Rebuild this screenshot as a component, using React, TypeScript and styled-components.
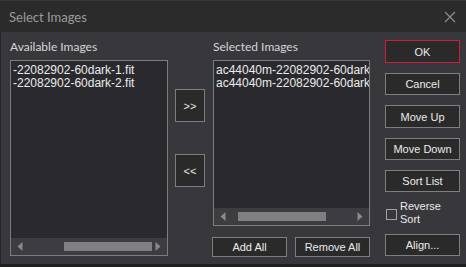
import React, { FC } from 'react';
import styled, { createGlobalStyle } from 'styled-components';

const GlobalStyle = createGlobalStyle`
  html, body {
    margin: 0;
    padding: 0;
    background: #1f1f1f;
  }
`;

const Window = styled.div`
  width: 466px;
  height: 267px;
  display: flex;
  flex-direction: column;
  background-color: #1f1f1f;
  overflow: hidden;
`;

const TitleBar = styled.div`
  height: 32px;
  flex-shrink: 0;
  display: flex;
  align-items: center;
  justify-content: space-between;
  background-color: #2b2b2b;
  padding: 0 9px;
  box-sizing: border-box;
  border-top: 1px solid #3a3a3a;
`;

const Title = styled.span`
  font-family: Lato, 'Noto Sans', sans-serif;
  font-size: 13px;
  color: #9b9b9b;
  margin-top: 1px;
`;

const CloseIcon = styled.svg`
  width: 12px;
  height: 12px;
  margin-right: 1px;
  margin-top: 1px;
`;

const Body = styled.div`
  height: 232px;
  flex-shrink: 0;
  display: flex;
  background-color: #38373c;
  padding-left: 9px;
  box-sizing: border-box;
  border-left: 1px solid #26262a;
`;

const ListColumn = styled.div<{ $width: number; $offset?: number }>`
  width: ${p => p.$width}px;
  margin-left: ${p => p.$offset ?? 0}px;
  display: flex;
  flex-direction: column;
`;

const Label = styled.div`
  height: 28px;
  padding-top: 7px;
  box-sizing: border-box;
  font-family: Lato, 'Noto Sans', sans-serif;
  font-size: 12px;
  color: #d6d6d6;
  line-height: 16px;
`;

const ListBox = styled.div<{ $height: number }>`
  height: ${p => p.$height}px;
  border: 1px solid #7d7d7d;
  background-color: #2a292d;
  box-sizing: border-box;
  display: flex;
  flex-direction: column;
  overflow: hidden;
`;

const Items = styled.div`
  flex: 1;
  padding: 3px 0 0 2px;
  overflow: hidden;
`;

const Item = styled.div`
  font-family: 'Liberation Sans', Arial, sans-serif;
  font-size: 12px;
  line-height: 12.5px;
  color: #ececec;
  white-space: nowrap;
`;

const ScrollBar = styled.div`
  height: 17px;
  flex-shrink: 0;
  display: flex;
  align-items: center;
  background-color: #3d3c41;
  padding: 0 6px;
`;

const Arrow = styled.svg`
  width: 6px;
  height: 9px;
  flex-shrink: 0;
`;

const Track = styled.div<{ $left: number; $width: number }>`
  flex: 1;
  height: 9px;
  position: relative;
  margin: 0 4px;
  &::after {
    content: '';
    position: absolute;
    top: 0;
    bottom: 0;
    left: ${p => p.$left}px;
    width: ${p => p.$width}px;
    background-color: #808080;
  }
`;

const MoveColumn = styled.div`
  width: 30px;
  margin-left: 7px;
  padding-top: 57px;
  display: flex;
  flex-direction: column;
  gap: 32px;
`;

const Button = styled.button<{ $primary?: boolean; $width?: number; $height?: number }>`
  width: ${p => p.$width ?? 75}px;
  height: ${p => p.$height ?? 23}px;
  flex-shrink: 0;
  padding: 0;
  margin: 0;
  background-color: #2a2a2b;
  border: 1px solid ${p => (p.$primary ? '#cf1c3c' : '#7e7e7e')};
  color: #eaeaea;
  font-family: 'Liberation Sans', Arial, sans-serif;
  font-size: 11px;
  box-sizing: border-box;
  cursor: pointer;
`;

const BottomRow = styled.div`
  display: flex;
  gap: 8px;
  margin-top: 11px;
  margin-left: -1px;
`;

const SideColumn = styled.div`
  width: 75px;
  margin-left: 15px;
  padding-top: 8px;
  display: flex;
  flex-direction: column;
  gap: 10px;
`;

const CheckRow = styled.label`
  display: flex;
  align-items: center;
  height: 26px;
  margin: -2px 0 -2px 1px;
  gap: 3px;
`;

const CheckBox = styled.span`
  width: 11px;
  height: 11px;
  border: 1px solid #a3a3a3;
  box-sizing: border-box;
  flex-shrink: 0;
  margin-top: 2px;
`;

const CheckText = styled.span`
  font-family: 'Liberation Sans', Arial, sans-serif;
  font-size: 11px;
  line-height: 13px;
  color: #eaeaea;
`;

const LeftArrow = () => (
  <Arrow viewBox="0 0 6 9">
    <polygon points="5.5,0 5.5,9 0.5,4.5" fill="#8a8a8a" />
  </Arrow>
);

const RightArrow = () => (
  <Arrow viewBox="0 0 6 9">
    <polygon points="0.5,0 0.5,9 5.5,4.5" fill="#8a8a8a" />
  </Arrow>
);

type ListProps = {
  items: string[];
  height: number;
  thumbLeft: number;
  thumbWidth: number;
};

const ImageList: FC<ListProps> = ({ items, height, thumbLeft, thumbWidth }) => (
  <ListBox $height={height}>
    <Items>
      {items.map(item => (
        <Item key={item}>{item}</Item>
      ))}
    </Items>
    <ScrollBar>
      <LeftArrow />
      <Track $left={thumbLeft} $width={thumbWidth} />
      <RightArrow />
    </ScrollBar>
  </ListBox>
);

const App: FC = () => {
  return (
    <>
      <GlobalStyle />
      <Window>
        <TitleBar>
          <Title>Select Images</Title>
          <CloseIcon viewBox="0 0 12 12">
            <path d="M1 1 L11 11 M11 1 L1 11" stroke="#8e8e8e" strokeWidth="1.2" fill="none" />
          </CloseIcon>
        </TitleBar>
        <Body>
          <ListColumn $width={158}>
            <Label>Available Images</Label>
            <ImageList
              height={196}
              items={['-22082902-60dark-1.fit', '-22082902-60dark-2.fit']}
              thumbLeft={37}
              thumbWidth={88}
            />
          </ListColumn>
          <MoveColumn>
            <Button $width={30} $height={33}>&gt;&gt;</Button>
            <Button $width={30} $height={33}>&lt;&lt;</Button>
          </MoveColumn>
          <ListColumn $width={157} $offset={8}>
            <Label>Selected Images</Label>
            <ImageList
              height={166}
              items={['ac44040m-22082902-60dark-1.fit', 'ac44040m-22082902-60dark-2.fit']}
              thumbLeft={8}
              thumbWidth={88}
            />
            <BottomRow>
              <Button $height={20}>Add All</Button>
              <Button $height={20}>Remove All</Button>
            </BottomRow>
          </ListColumn>
          <SideColumn>
            <Button $primary>OK</Button>
            <Button $height={22}>Cancel</Button>
            <Button>Move Up</Button>
            <Button $height={22}>Move Down</Button>
            <Button $height={22}>Sort List</Button>
            <CheckRow>
              <CheckBox />
              <CheckText>
                Reverse
                <br />
                Sort
              </CheckText>
            </CheckRow>
            <Button $height={22}>Align...</Button>
          </SideColumn>
        </Body>
      </Window>
    </>
  );
};

export default App;
